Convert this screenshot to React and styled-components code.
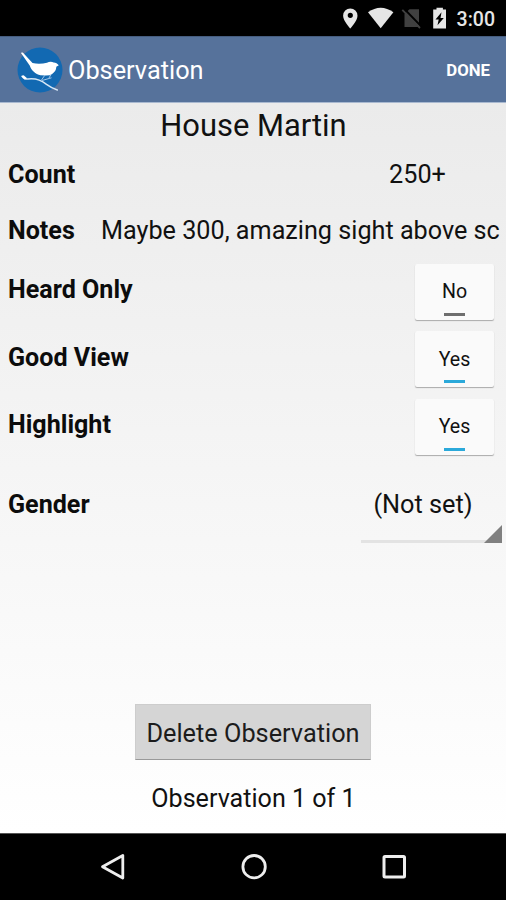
import React, {useState} from 'react';
import styled, {createGlobalStyle} from "styled-components";


const GlobalStyle = createGlobalStyle`
  * {
    box-sizing: border-box;
  }
  body {
    margin: 0;
    background: #000;
    font-family: Roboto, "Liberation Sans", sans-serif;
  }
  button {
    font-family: inherit;
    border: 0;
    padding: 0;
  }
`;

const Screen = styled.div`
  width: 506px;
  height: 900px;
  display: flex;
  flex-direction: column;
  overflow: hidden;
  color: #111;
`;

const StatusBar = styled.div`
  height: 36px;
  padding-right: 11px;
  display: flex;
  align-items: center;
  justify-content: flex-end;
  background: #000;
`;

const Clock = styled.span`
  margin-left: 11px;
  padding-top: 3px;
  color: #e6e6e6;
  font-size: 19.5px;
  font-weight: 500;
  line-height: 24px;
`;

const AppBar = styled.header`
  height: 67px;
  padding: 0 16px 0 17px;
  display: flex;
  align-items: center;
  background: #56729b;
  border-top: 1px solid #465d7f;
  border-bottom: 1px solid #a9b9d0;
`;

const AppTitle = styled.h1`
  flex: 1;
  margin: 2px 0 0 5px;
  color: #fff;
  font-size: 25.3px;
  font-weight: 400;
`;

const DoneButton = styled.button`
  background: none;
  color: #fff;
  font-size: 16.8px;
  font-weight: 700;
`;

const Content = styled.main`
  height: 730px;
  display: flex;
  flex-direction: column;
  background: linear-gradient(#ebebeb, #fff);
`;

const Species = styled.h2`
  height: 45px;
  margin: 0;
  padding-left: 1px;
  font-size: 30.9px;
  font-weight: 400;
  line-height: 46px;
  text-align: center;
`;

const Row = styled.div`
  height: ${props => props.$height}px;
  padding: 0 12px 0 8px;
  display: flex;
  align-items: center;
  justify-content: space-between;
`;

const Label = styled.span`
  padding-bottom: ${props => props.$lift || 0}px;
  color: #0c0c0c;
  font-size: 25.1px;
  font-weight: 700;
  white-space: nowrap;
`;

const Count = styled.span`
  width: 153px;
  font-size: 25.2px;
  text-align: center;
`;

const Notes = styled.span`
  width: 405px;
  margin-right: -12px;
  font-size: 25.2px;
  white-space: nowrap;
  overflow: hidden;
`;

const Flags = styled.div`
  height: 202.5px;
  margin-top: -2px;
  margin-bottom: 2px;
`;

const Toggle = styled.button`
  width: 79px;
  height: 56px;
  padding-top: 16.5px;
  display: flex;
  flex-direction: column;
  align-items: center;
  justify-content: space-between;
  background: #fafafa;
  border-radius: 2px;
  box-shadow: 0 1px 1px #aaa;
  color: #111;
  font-size: 19.6px;
  line-height: 24px;

  &::after {
    content: "";
    width: 21px;
    height: 3px;
    margin-bottom: 4px;
    background: ${props => props.$on ? "#2ba9da" : "#6e6e6e"};
  }
`;

const Spinner = styled.div`
  width: 141px;
  height: 76px;
  margin-right: -8px;
  padding: 23px 17px 0 0;
  border-bottom: 3px solid #e3e3e3;
  font-size: 25.3px;
  text-align: center;
  position: relative;
`;

const SpinnerCorner = styled.svg`
  position: absolute;
  right: 0;
  bottom: -3px;
`;

const Bottom = styled.div`
  margin-top: auto;
  display: flex;
  flex-direction: column;
  align-items: center;
`;

const DeleteButton = styled.button`
  width: 236px;
  height: 56px;
  padding-top: 2px;
  background: #d5d5d5;
  border: 1px solid #cdcdcd;
  border-bottom: 1px solid #999;
  color: #1c1c1c;
  font-size: 25.3px;
`;

const Position = styled.div`
  height: 73px;
  padding-left: 1px;
  font-size: 25.1px;
  line-height: 78px;
`;

const NavBar = styled.nav`
  height: 67px;
  padding: 0 95px 0 96px;
  display: flex;
  align-items: center;
  justify-content: space-between;
  background: #000;
  border-top: 1px solid #555;
`;

const StatusIcons=()=>(
  <svg width="106" height="36" viewBox="340 0 106 36">
    <path fill="#e6e6e6" fillRule="evenodd" d="M350.3 8.5a7.2 7.2 0 0 0-7.2 7.2c0 5.2 7.2 12.8 7.2 12.8s7.2-7.6 7.2-12.8a7.2 7.2 0 0 0-7.2-7.2zm0 4.2a2.6 2.6 0 1 1 0 5.2 2.6 2.6 0 0 1 0-5.2z"/>
    <path fill="#e6e6e6" d="M368 12.3Q380.7 3.3 393.4 12.3L380.700 28.200z"/>
    <path fill="#404040" d="M409.500 9.200H419V27H404.500V14z"/>
    <path stroke="#000" strokeWidth="2" d="M403.800 8.500L421.300 26.500"/>
    <path stroke="#404040" strokeWidth="1.800" d="M402.300 9.800L420 28"/>
    <path fill="#e6e6e6" fillRule="evenodd" d="M433.200 9.500h3.300V7.800h6.400v1.700h3.300v19h-13zM441.500 12.200l-6 7.300h3.200l-1.200 5.800 6.300-7.300h-3.300z"/>
  </svg>
)

const BirdLogo=()=>(
  <svg width="46" height="46" viewBox="0 0 46 46">
    <circle cx="23" cy="23" r="22.500" fill="#1269b2"/>
    <path fill="#fff" d="M3.800 5.800L5.800 5.400 15.500 16C20 17 25.500 16.800 30 15.800 32 14.700 34.600 14.500 36.600 15.500 38.500 15.400 40.500 16.600 41.800 18.300L39.300 19.800C39.400 23.500 36.500 26.800 33 28.200L28.500 28.500 23.500 28.300C18.500 27.200 14.300 23.300 12.700 18.500z"/>
    <path fill="none" stroke="#9fc5e8" strokeWidth="1" d="M28 28l-3.500 5M34 27.500l-2 3.500"/>
    <path fill="none" stroke="#d5e6f5" strokeWidth="1.500" strokeLinecap="round" d="M5.200 29.300C6.500 31.600 8.500 32.200 11 32 17 31.200 24 33 29.500 37.300 33 39.800 36 41.600 40.300 43"/>
    <path fill="none" stroke="#9fc5e8" strokeWidth="1" d="M25 33.500L34.500 30.800"/>
    <path fill="#fff" d="M4.200 29l2.500-.800 3.300 3-2.500 1.300z"/>
  </svg>
)

const flags = [
  {id: "heard", name: "Heard Only", on: false},
  {id: "view", name: "Good View", on: true},
  {id: "highlight", name: "Highlight", on: true},
];

const App=()=>{

    const [values, setValues] = useState(flags);

    const flip = (id)=>setValues(values.map(v=>v.id === id ? {...v, on: !v.on} : v));

    return(
      <Screen>
      <GlobalStyle />
      <StatusBar>
        <StatusIcons />
        <Clock>3:00</Clock>
      </StatusBar>
      <AppBar>
        <BirdLogo />
        <AppTitle>Observation</AppTitle>
        <DoneButton>DONE</DoneButton>
      </AppBar>
      <Content>
        <Species>House Martin</Species>
        <Row $height={52}>
          <Label>Count</Label>
          <Count>250+</Count>
        </Row>
        <Row $height={60}>
          <Label>Notes</Label>
          <Notes>Maybe 300, amazing sight above sc</Notes>
        </Row>
        <Flags>
        {values.map(v=>(
          <Row key={v.id} $height={67.5}>
            <Label $lift={4}>{v.name}</Label>
            <Toggle $on={v.on} onClick={()=>flip(v.id)}>{v.on ? "Yes" : "No"}</Toggle>
          </Row>
        ))}
        </Flags>
        <Row $height={84}>
          <Label $lift={1}>Gender</Label>
          <Spinner>
            (Not set)
            <SpinnerCorner width="18" height="18"><path fill="#808080" d="M18 0V18H0z"/></SpinnerCorner>
          </Spinner>
        </Row>
        <Bottom>
          <DeleteButton>Delete Observation</DeleteButton>
          <Position>Observation 1 of 1</Position>
        </Bottom>
      </Content>
      <NavBar>
        <svg width="34" height="34" viewBox="96 850 34 34"><path fill="none" stroke="#eee" strokeWidth="2.800" strokeLinejoin="round" d="M122.800 855.500V878L102.500 866.700z"/></svg>
        <svg width="34" height="34" viewBox="236.500 850 34 34"><circle cx="253.600" cy="866.700" r="11.200" fill="none" stroke="#eee" strokeWidth="2.800"/></svg>
        <svg width="34" height="34" viewBox="377 850 34 34"><rect x="384" y="856.500" width="20.500" height="20.500" rx="1" fill="none" stroke="#eee" strokeWidth="3"/></svg>
      </NavBar>
      </Screen>
    )

}


export default App;
